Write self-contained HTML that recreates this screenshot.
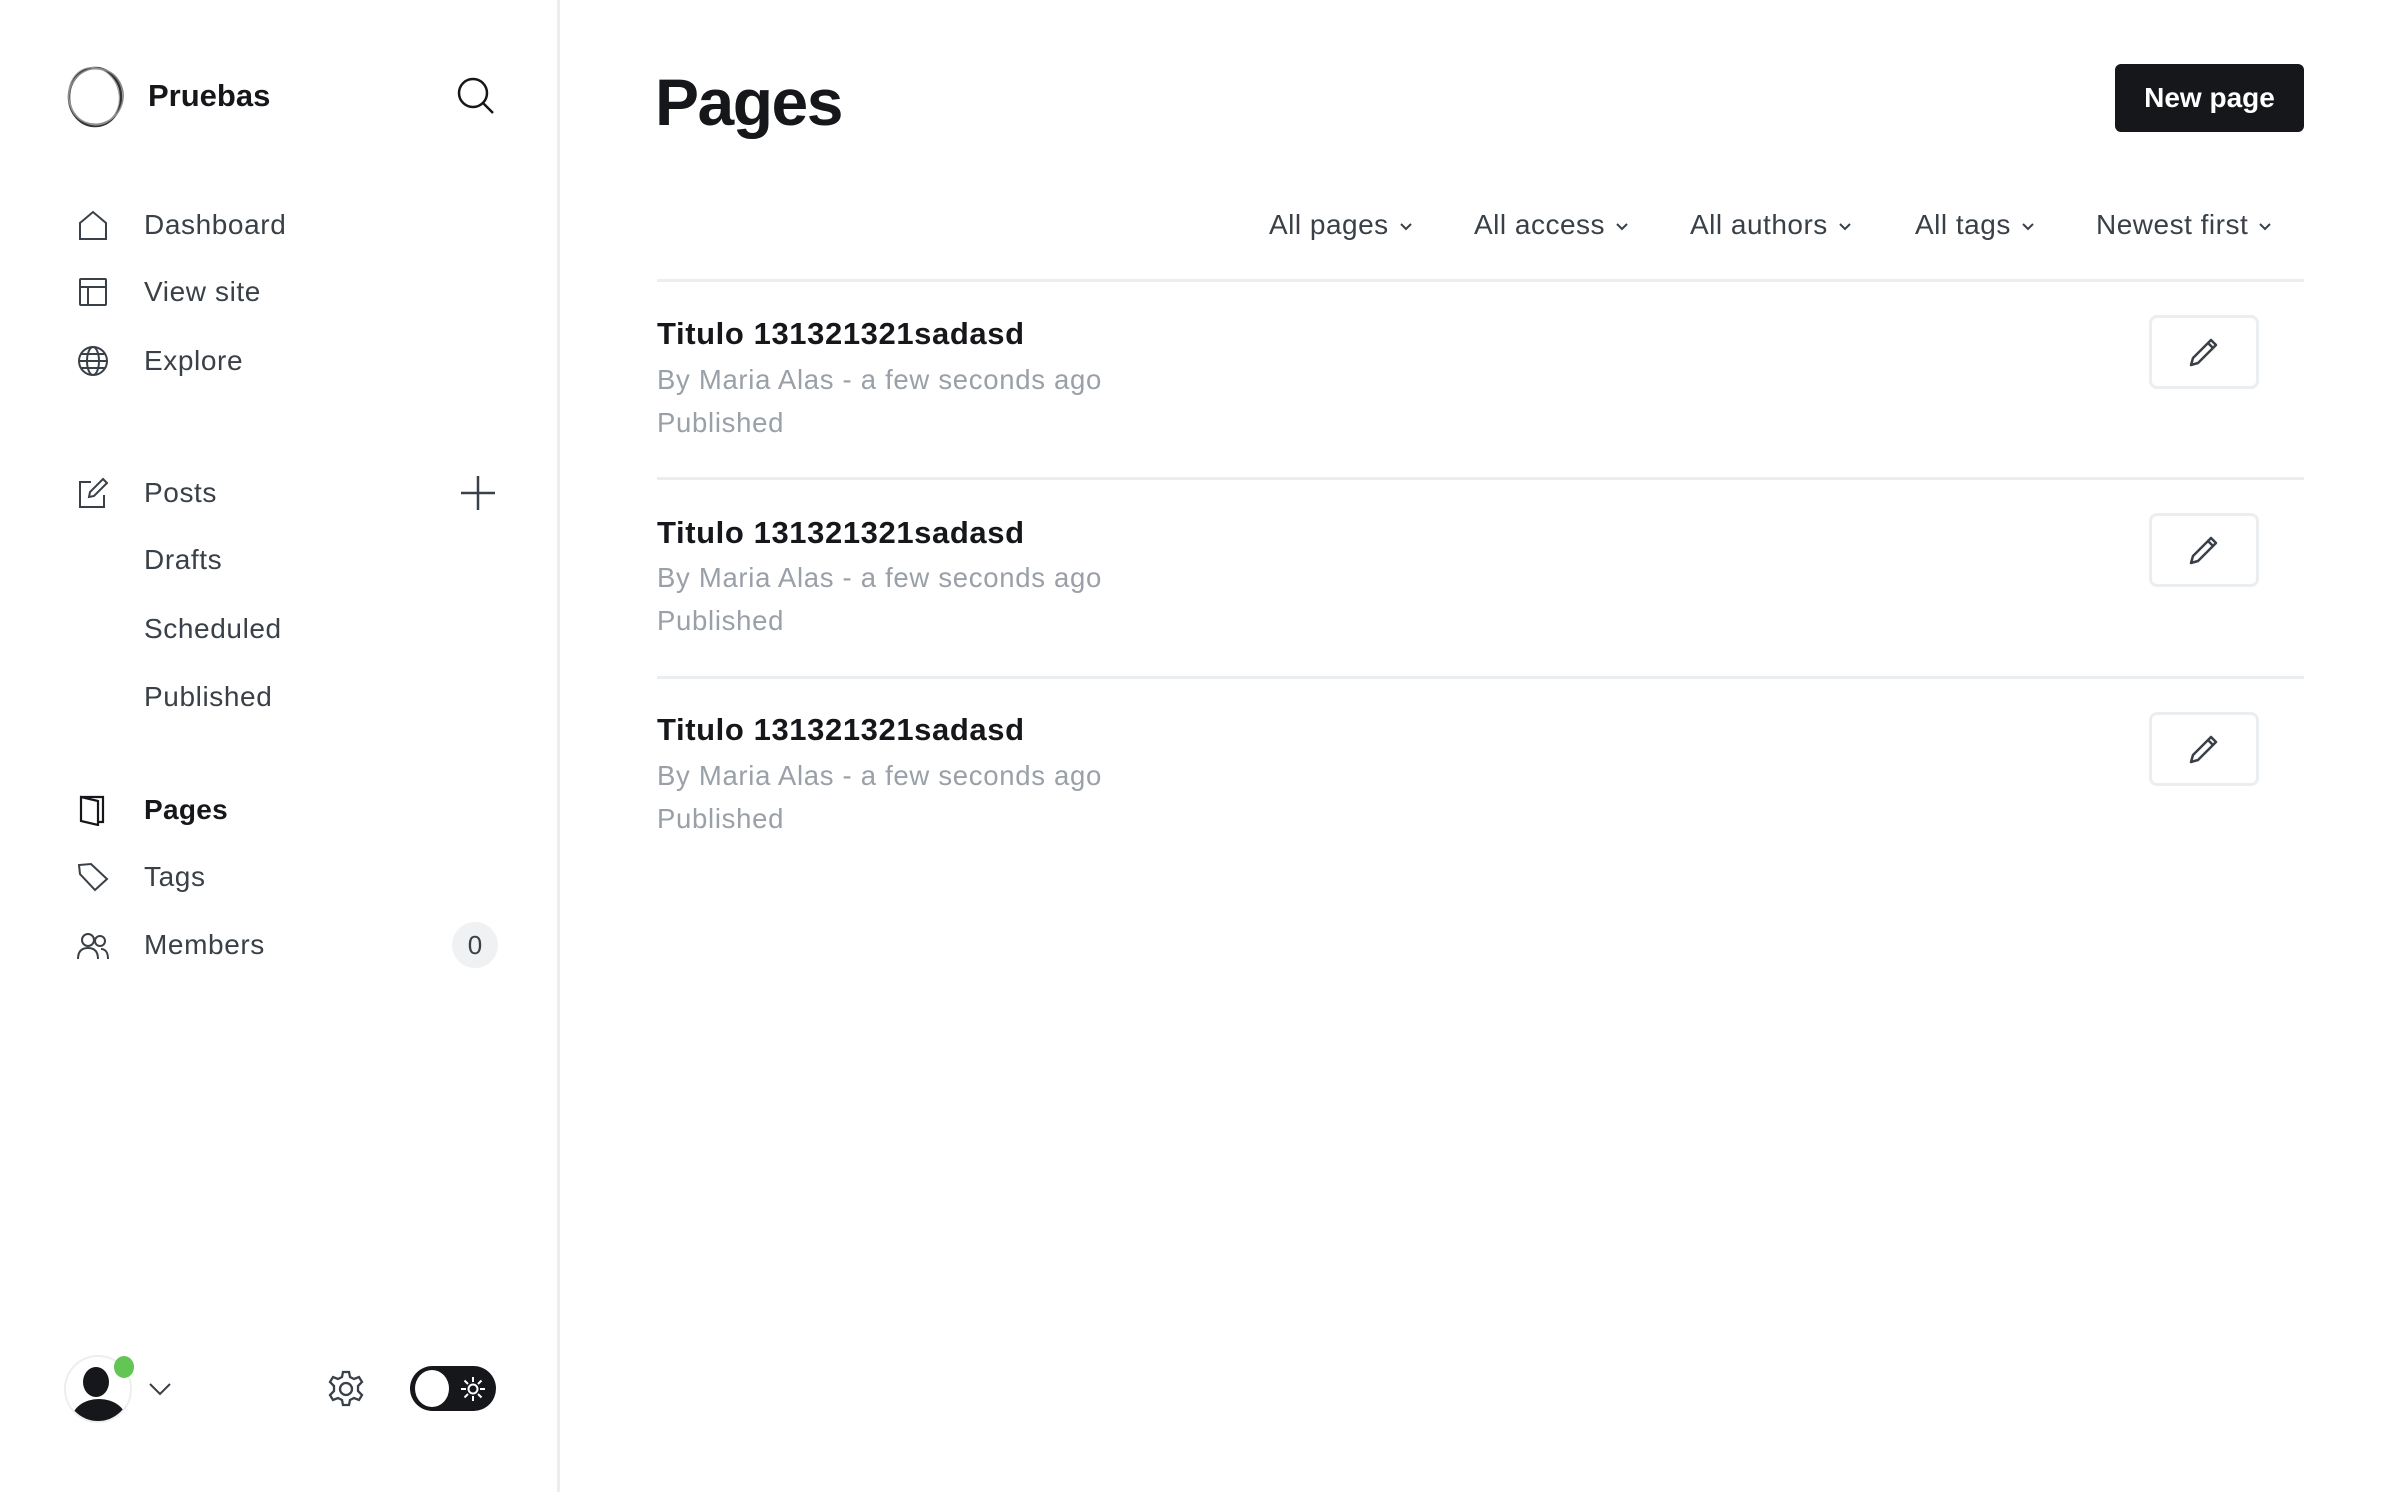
<!DOCTYPE html>
<html><head><meta charset="utf-8"><style>
*{margin:0;padding:0;box-sizing:border-box}
body{width:2400px;height:1492px;background:#fff;font-family:"Liberation Sans",sans-serif;position:relative;overflow:hidden;color:#15171a}
.a{position:absolute;white-space:nowrap}
.side{position:absolute;left:0;top:0;width:560px;height:1492px;border-right:3px solid #ebeef0}
.nav{position:absolute;left:144px;font-size:28px;color:#394047;line-height:40px;letter-spacing:0.6px}
.ic{position:absolute;left:77px;width:32px;height:32px}
.filt{position:absolute;top:205px;font-size:28px;color:#394047;line-height:40px;letter-spacing:0.5px}
.filt svg{margin-left:10px;vertical-align:middle}
.hr{position:absolute;left:657px;width:1647px;height:3px;background:#ebeef0}
.t{position:absolute;left:657px;font-size:31px;font-weight:bold;line-height:40px;color:#15171a;letter-spacing:0.6px}
.m{position:absolute;left:657px;font-size:27.5px;line-height:40px;color:#99a0a8;letter-spacing:0.7px}
.eb{position:absolute;left:2149px;width:110px;height:74px;border:3px solid #ebeef0;border-radius:8px;display:flex;align-items:center;justify-content:center}
</style></head><body>
<div class="side">
<svg class="a" style="left:63px;top:64px" width="64" height="64" viewBox="0 0 64 64" fill="none" stroke="#333"><ellipse cx="32" cy="33" rx="26" ry="29" stroke-width="2.5"/><ellipse cx="33" cy="32" rx="27" ry="28" stroke-width="1.5" stroke="#888" transform="rotate(20 32 32)"/><ellipse cx="31" cy="32" rx="25" ry="29" stroke-width="1" stroke="#999" transform="rotate(-15 32 32)"/></svg>
<div class="a" style="left:148px;top:76px;font-size:31px;font-weight:bold;line-height:40px">Pruebas</div>
<svg class="a" style="left:456px;top:76px" width="40" height="40" viewBox="0 0 40 40" fill="none" stroke="#15171a" stroke-width="2.5"><circle cx="17" cy="17" r="14"/><line x1="27" y1="27" x2="37" y2="37"/></svg>

<svg class="ic" style="top:209px" viewBox="0 0 32 32" fill="none" stroke="#394047" stroke-width="2"><path d="M3 14 L16 3 L29 14 V30 H3 Z"/></svg>
<div class="nav" style="top:205px">Dashboard</div>
<svg class="ic" style="top:276px" viewBox="0 0 32 32" fill="none" stroke="#394047" stroke-width="2"><rect x="3" y="3" width="26" height="26" rx="1"/><path d="M3 11H29M11 11V29"/></svg>
<div class="nav" style="top:272px">View site</div>
<svg class="ic" style="top:345px" viewBox="0 0 32 32" fill="none" stroke="#394047" stroke-width="2"><circle cx="16" cy="16" r="14"/><ellipse cx="16" cy="16" rx="6" ry="14"/><path d="M2 16H30M4 9H28M4 23H28"/></svg>
<div class="nav" style="top:341px">Explore</div>

<svg class="ic" style="top:477px" viewBox="0 0 32 32" fill="none" stroke="#394047" stroke-width="2"><path d="M14 5H3V30H27V18"/><path d="M26 2L30 6L17 19L12 20L13 15Z"/></svg>
<div class="nav" style="top:473px">Posts</div>
<svg class="a" style="left:460px;top:475px" width="36" height="36" viewBox="0 0 36 36" stroke="#394047" stroke-width="2.5"><path d="M18 1V35M1 18H35"/></svg>
<div class="nav" style="top:540px">Drafts</div>
<div class="nav" style="top:609px">Scheduled</div>
<div class="nav" style="top:677px">Published</div>

<svg class="ic" style="top:794px" viewBox="0 0 32 32" fill="none" stroke="#15171a" stroke-width="2.2"><path d="M4 3H26V28H21"/><path d="M4 3L21 7V31L4 27Z"/></svg>
<div class="nav" style="top:790px;font-weight:bold;color:#15171a;letter-spacing:0.3px">Pages</div>
<svg class="ic" style="top:861px" viewBox="0 0 32 32" fill="none" stroke="#394047" stroke-width="2"><path d="M2 4L3 13L18 29L30 18L14 3Z"/></svg>
<div class="nav" style="top:857px">Tags</div>
<svg class="ic" style="top:929px" viewBox="0 0 32 32" fill="none" stroke="#394047" stroke-width="2"><circle cx="11" cy="11" r="6"/><path d="M1 30C1 22 5 19 11 19S21 22 21 30"/><circle cx="23" cy="12" r="5"/><path d="M24 20C28 20 31 23 31 30"/></svg>
<div class="nav" style="top:925px">Members</div>
<div class="a" style="left:452px;top:922px;width:46px;height:46px;border-radius:50%;background:#eff1f3;font-size:26px;color:#394047;text-align:center;line-height:46px">0</div>

<div class="a" style="left:64px;top:1355px;width:68px;height:68px;border-radius:50%;border:2px solid #eee;overflow:hidden;background:#fff">
<div class="a" style="left:17px;top:10px;width:26px;height:30px;border-radius:50%;background:#15171a"></div>
<div class="a" style="left:6px;top:42px;width:54px;height:40px;border-radius:50%;background:#15171a"></div></div>
<div class="a" style="left:114px;top:1356px;width:20px;height:22px;border-radius:50%;background:#62c554"></div>
<svg class="a" style="left:148px;top:1382px" width="24" height="14" viewBox="0 0 24 14" fill="none" stroke="#394047" stroke-width="2"><path d="M2 2L12 12L22 2"/></svg>
<svg class="a" style="left:327px;top:1369px" width="38" height="40" viewBox="0 0 38 40" fill="none" stroke="#394047" stroke-width="2.3"><path d="M16 3h6l1 5 4 2 5-2 3 5-4 4v5l4 4-3 5-5-2-4 2-1 5h-6l-1-5-4-2-5 2-3-5 4-4v-5l-4-4 3-5 5 2 4-2z"/><circle cx="19" cy="20" r="6"/></svg>
<div class="a" style="left:410px;top:1366px;width:86px;height:45px;border-radius:23px;background:#15171a">
<div class="a" style="left:5px;top:4px;width:34px;height:37px;border-radius:50%;background:#fff"></div>
<svg class="a" style="left:50px;top:10px" width="26" height="26" viewBox="0 0 26 26" fill="none" stroke="#fff" stroke-width="2"><circle cx="13" cy="13" r="4.5"/><path d="M13 1v5M13 20v5M1 13h5M20 13h5M4.5 4.5l3.5 3.5M18 18l3.5 3.5M4.5 21.5l3.5-3.5M18 8l3.5-3.5"/></svg></div>
</div>

<div class="a" style="left:655px;top:62px;font-size:66px;font-weight:bold;line-height:80px;letter-spacing:-1.5px">Pages</div>
<div class="a" style="left:2115px;top:64px;width:189px;height:68px;background:#15171a;border-radius:6px;color:#fff;font-size:28px;font-weight:bold;text-align:center;line-height:68px">New page</div>

<div class="filt" style="left:1269px">All pages<svg width="14" height="10" viewBox="0 0 14 10" fill="none" stroke="#394047" stroke-width="2"><path d="M2 2l5 5 5-5"/></svg></div>
<div class="filt" style="left:1474px">All access<svg width="14" height="10" viewBox="0 0 14 10" fill="none" stroke="#394047" stroke-width="2"><path d="M2 2l5 5 5-5"/></svg></div>
<div class="filt" style="left:1690px">All authors<svg width="14" height="10" viewBox="0 0 14 10" fill="none" stroke="#394047" stroke-width="2"><path d="M2 2l5 5 5-5"/></svg></div>
<div class="filt" style="left:1915px">All tags<svg width="14" height="10" viewBox="0 0 14 10" fill="none" stroke="#394047" stroke-width="2"><path d="M2 2l5 5 5-5"/></svg></div>
<div class="filt" style="left:2096px">Newest first<svg width="14" height="10" viewBox="0 0 14 10" fill="none" stroke="#394047" stroke-width="2"><path d="M2 2l5 5 5-5"/></svg></div>

<div class="hr" style="top:279px"></div>
<div class="t" style="top:314px">Titulo 131321321sadasd</div>
<div class="m" style="top:360px">By Maria Alas - a few seconds ago</div>
<div class="m" style="top:403px">Published</div>
<div class="eb" style="top:315px"><svg width="34" height="34" viewBox="0 0 34 34" fill="none" stroke="#394047" stroke-width="2.5" stroke-linejoin="round"><path d="M4 30L6 23L24 5L29 10L11 28Z M21 8L26 13"/></svg></div>
<div class="hr" style="top:477px"></div>
<div class="t" style="top:513px">Titulo 131321321sadasd</div>
<div class="m" style="top:558px">By Maria Alas - a few seconds ago</div>
<div class="m" style="top:601px">Published</div>
<div class="eb" style="top:513px"><svg width="34" height="34" viewBox="0 0 34 34" fill="none" stroke="#394047" stroke-width="2.5" stroke-linejoin="round"><path d="M4 30L6 23L24 5L29 10L11 28Z M21 8L26 13"/></svg></div>
<div class="hr" style="top:676px"></div>
<div class="t" style="top:710px">Titulo 131321321sadasd</div>
<div class="m" style="top:756px">By Maria Alas - a few seconds ago</div>
<div class="m" style="top:799px">Published</div>
<div class="eb" style="top:712px"><svg width="34" height="34" viewBox="0 0 34 34" fill="none" stroke="#394047" stroke-width="2.5" stroke-linejoin="round"><path d="M4 30L6 23L24 5L29 10L11 28Z M21 8L26 13"/></svg></div>
</body></html>
